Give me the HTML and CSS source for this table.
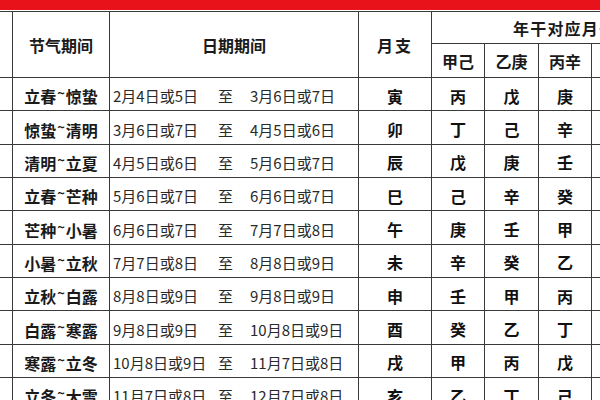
FILE: index.html
```html
<!DOCTYPE html>
<html lang="zh">
<head>
<meta charset="utf-8">
<link rel="stylesheet" href="styles.css">
</head>
<body>
<div class="page">
  <div class="redbar"></div>
  <table class="tbl">
    <colgroup>
      <col class="c0"><col class="c1"><col class="c2"><col class="c3">
      <col class="c4"><col class="c5"><col class="c6"><col class="c7"><col class="c8">
    </colgroup>
    <thead>
      <tr class="h1">
        <th rowspan="2" class="m">月份</th>
        <th rowspan="2">节气期间</th>
        <th rowspan="2">日期期间</th>
        <th rowspan="2" class="zhi">月支</th>
        <th colspan="5" class="yg">年干对应月干</th>
      </tr>
      <tr class="h2">
        <th>甲己</th><th>乙庚</th><th>丙辛</th><th>丁壬</th><th>戊癸</th>
      </tr>
    </thead>
    <tbody>
      <tr><td>正月</td><td class="jq">立春<span class="t">~</span>惊蛰</td><td class="dt"><span class="d"><span>2月4日或5日</span><span>至</span><span>3月6日或7日</span></span></td><td class="g">寅</td><td class="g">丙</td><td class="g">戊</td><td class="g">庚</td><td class="g">壬</td><td class="g">甲</td></tr>
      <tr><td>二月</td><td class="jq">惊蛰<span class="t">~</span>清明</td><td class="dt"><span class="d"><span>3月6日或7日</span><span>至</span><span>4月5日或6日</span></span></td><td class="g">卯</td><td class="g">丁</td><td class="g">己</td><td class="g">辛</td><td class="g">癸</td><td class="g">乙</td></tr>
      <tr><td>三月</td><td class="jq">清明<span class="t">~</span>立夏</td><td class="dt"><span class="d"><span>4月5日或6日</span><span>至</span><span>5月6日或7日</span></span></td><td class="g">辰</td><td class="g">戊</td><td class="g">庚</td><td class="g">壬</td><td class="g">甲</td><td class="g">丙</td></tr>
      <tr><td>四月</td><td class="jq">立春<span class="t">~</span>芒种</td><td class="dt"><span class="d"><span>5月6日或7日</span><span>至</span><span>6月6日或7日</span></span></td><td class="g">巳</td><td class="g">己</td><td class="g">辛</td><td class="g">癸</td><td class="g">乙</td><td class="g">丁</td></tr>
      <tr><td>五月</td><td class="jq">芒种<span class="t">~</span>小暑</td><td class="dt"><span class="d"><span>6月6日或7日</span><span>至</span><span>7月7日或8日</span></span></td><td class="g">午</td><td class="g">庚</td><td class="g">壬</td><td class="g">甲</td><td class="g">丙</td><td class="g">戊</td></tr>
      <tr><td>六月</td><td class="jq">小暑<span class="t">~</span>立秋</td><td class="dt"><span class="d"><span>7月7日或8日</span><span>至</span><span>8月8日或9日</span></span></td><td class="g">未</td><td class="g">辛</td><td class="g">癸</td><td class="g">乙</td><td class="g">丁</td><td class="g">己</td></tr>
      <tr><td>七月</td><td class="jq">立秋<span class="t">~</span>白露</td><td class="dt"><span class="d"><span>8月8日或9日</span><span>至</span><span>9月8日或9日</span></span></td><td class="g">申</td><td class="g">壬</td><td class="g">甲</td><td class="g">丙</td><td class="g">戊</td><td class="g">庚</td></tr>
      <tr><td>八月</td><td class="jq">白露<span class="t">~</span>寒露</td><td class="dt"><span class="d"><span>9月8日或9日</span><span>至</span><span>10月8日或9日</span></span></td><td class="g">酉</td><td class="g">癸</td><td class="g">乙</td><td class="g">丁</td><td class="g">己</td><td class="g">辛</td></tr>
      <tr><td>九月</td><td class="jq">寒露<span class="t">~</span>立冬</td><td class="dt"><span class="d"><span>10月8日或9日</span><span>至</span><span>11月7日或8日</span></span></td><td class="g">戌</td><td class="g">甲</td><td class="g">丙</td><td class="g">戊</td><td class="g">庚</td><td class="g">壬</td></tr>
      <tr><td>十月</td><td class="jq">立冬<span class="t">~</span>大雪</td><td class="dt"><span class="d"><span>11月7日或8日</span><span>至</span><span>12月7日或8日</span></span></td><td class="g">亥</td><td class="g">乙</td><td class="g">丁</td><td class="g">己</td><td class="g">辛</td><td class="g">癸</td></tr>
    </tbody>
  </table>
</div>
</body>
</html>
```

FILE: styles.css
```css
html, body {
  margin: 0;
  padding: 0;
  background: #fff;
}
.page {
  width: 600px;
  height: 400px;
  overflow: hidden;
  font-family: "Noto Sans CJK SC", "Liberation Sans", sans-serif;
  color: #111;
}
.redbar {
  height: 10px;
  background: #e8121a;
  margin-bottom: 1px;
}
.tbl {
  border-collapse: collapse;
  table-layout: fixed;
  width: 745px;
  margin-left: -48px;
}
.c0 { width: 60px; }
.c1 { width: 97px; }
.c2 { width: 249px; }
.c3 { width: 73px; }
.c4 { width: 53px; }
.c5 { width: 54px; }
.c6 { width: 53px; }
.c7 { width: 53px; }
.c8 { width: 53px; }
.tbl th, .tbl td {
  border: 1px solid #3a3a3a;
  padding: 0;
  text-align: center;
  vertical-align: middle;
  white-space: nowrap;
  overflow: hidden;
}
.tbl th {
  font-size: 16px;
  font-weight: bold;
  color: #1a1a1a;
}
.tbl th.m {
  text-align: right;
  padding-right: 56px;
}
.h1 { height: 32px; }
.h2 { height: 34px; }
.zhi { letter-spacing: 2px; }
.tbl th.yg {
  text-align: left;
  padding-left: 81px;
  letter-spacing: 1.2px;
}
.tbl tbody tr { height: 33.35px; }
.tbl td {
  font-size: 16px;
  padding-top: 3px;
}
.jq {
  font-weight: bold;
  font-size: 16.5px;
  color: #1a1a1a;
}
.t {
  display: inline-block;
  font-size: 13px;
  vertical-align: 5px;
  margin: 0 1px;
}
.tbl td.dt {
  text-align: left;
  font-size: 15px;
  color: #2a2a2a;
}
.d {
  display: grid;
  grid-template-columns: 105px 32px auto;
  padding-left: 3px;
}
.g {
  font-weight: bold;
  font-size: 17px;
}
```
